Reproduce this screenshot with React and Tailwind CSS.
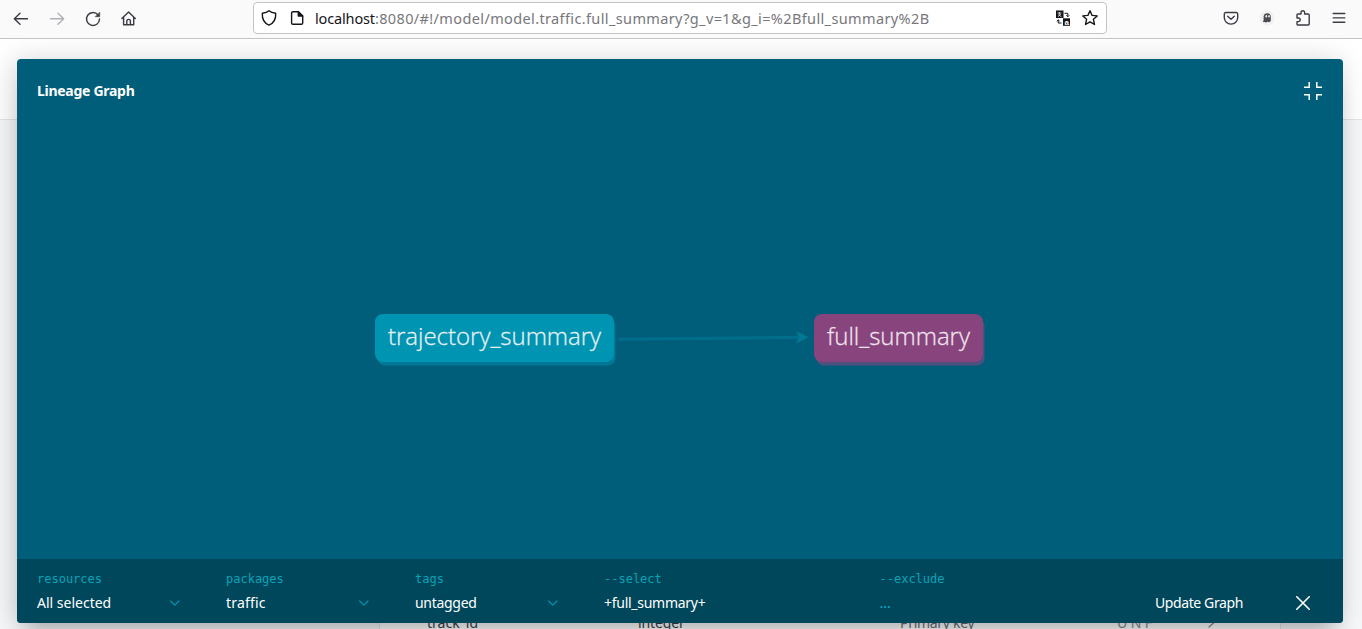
import React from "react";

const UI = "font-['Noto_Sans',sans-serif]";

function Icon({ size = 18, className = "", children, sw = 1.4 }) {
  return (
    <svg
      width={size}
      height={size}
      viewBox={`0 0 ${size} ${size}`}
      fill="none"
      stroke="currentColor"
      strokeWidth={sw}
      strokeLinecap="round"
      strokeLinejoin="round"
      className={`block shrink-0 ${className}`}
    >
      {children}
    </svg>
  );
}

function Toolbar() {
  return (
    <header className="flex h-[39px] items-start border-b border-[#c4c4c7] bg-[#fafafb] text-[#3b3b44]">
      <nav className="flex w-[253px] shrink-0 gap-[18px] pt-[10px] pl-3">
        <Icon>
          <path d="M15.5 8.7H2.5M8 3.2L2.3 8.7L8 14.2" />
        </Icon>
        <Icon className="text-[#b0b0b4]">
          <path d="M2.5 8.7H15.5M10 3.2L15.7 8.7L10 14.2" />
        </Icon>
        <Icon>
          <path d="M14.2 5.1A6.5 6.5 0 1 0 15.5 9" />
          <path d="M15.7 2.5V6.7H11.5Z" fill="currentColor" strokeWidth="0.6" />
        </Icon>
        <Icon>
          <path d="M1.9 8.6L8.6 2.1L15.3 8.6M3.6 7.2V14.8H13.7V7.2M6.8 14.6V11.2A1.8 1.8 0 0 1 10.4 11.2V14.6" />
        </Icon>
      </nav>
      <div className="mt-[2px] flex h-8 w-[854px] shrink-0 items-center rounded-[4px] border border-[#c4c4c7] bg-white pl-[6px] text-[#15141a]">
        <Icon>
          <path d="M9 1.7C10.7 3.2 13 3.9 15.7 4.2C16 10 13.7 14.2 9 16.1C4.3 14.2 2 10 2.3 4.2C5 3.9 7.3 3.2 9 1.7Z" />
        </Icon>
        <Icon className="ml-[10px]">
          <path d="M5 2.7H10.3L14.7 7V13.9A1.4 1.4 0 0 1 13.3 15.3H5A1.4 1.4 0 0 1 3.6 13.9V4.1A1.4 1.4 0 0 1 5 2.7Z" />
          <path d="M10.3 2.7V7H14.7Z" fill="currentColor" />
        </Icon>
        <span className={`${UI} ml-[9px] w-[730px] pb-[1px] text-[14.5px] leading-5 tracking-[0.37px] whitespace-nowrap`}>
          <span className="tracking-[-0.15px]">localhost</span>
          <span className="text-[#77777c]">:8080/#!/model/model.traffic.full_summary?g_v=1&amp;g_i=%2Bfull_summary%2B</span>
        </span>
        <svg width="16" height="18" viewBox="0 0 16 18" className="ml-[10px] block shrink-0">
          <rect x="1" y="1.5" width="7.5" height="7.5" fill="#15141a" />
          <path d="M2.5 4H6.5M4.5 3V5.5M3 7.7L6 5M3 5.5L6.5 7.7" stroke="#fff" strokeWidth="0.7" fill="none" />
          <rect x="8" y="9.3" width="7" height="7.5" fill="#15141a" />
          <text x="9.4" y="15.6" fontSize="8" fontWeight="700" fill="#fff" fontFamily="Liberation Sans, sans-serif">a</text>
          <path d="M9.5 4.3H12.8V7.5M11.4 6.3L12.8 7.8L14.2 6.3M6.5 14H3.2V11M1.8 12.2L3.2 10.8L4.6 12.2" stroke="#15141a" fill="none" />
        </svg>
        <Icon className="ml-[10px]">
          <path d="M9 1.7L11.1 6.4L16.2 6.9L12.4 10.3L13.5 15.5L9 12.8L4.5 15.5L5.6 10.3L1.8 6.9L6.9 6.4Z" />
        </Icon>
      </div>
      <div className="flex grow items-start justify-end gap-[18px] pt-[9px] pr-[14px]">
        <Icon>
          <path d="M3.6 3.5H14.4A1.5 1.5 0 0 1 15.7 5V8.7A6.7 6.4 0 0 1 2.3 8.7V5A1.5 1.5 0 0 1 3.6 3.5Z" />
          <path d="M5.7 7.2L9 10.3L12.3 7.2" />
        </Icon>
        <svg width="18" height="18" viewBox="0 0 18 18" className="block shrink-0">
          <circle cx="9" cy="9" r="7.6" fill="#f1f1f2" />
          <path d="M4.8 12.9L5.6 11.5V7.4Q6 4.3 9.4 4.3Q12.8 4.5 12.8 8V12L11.2 13.2L9.8 12.8L8 13.5L6.5 12.9Z" fill="#4a4a50" />
          <ellipse cx="8.3" cy="7.3" rx="0.9" ry="1.3" fill="#ececee" />
          <ellipse cx="11" cy="7.3" rx="0.8" ry="1.3" fill="#ececee" />
        </svg>
        <Icon>
          <path d="M3 7.6V5.8A.8 .8 0 0 1 3.8 5H7V3.5A1.8 1.8 0 0 1 10.6 3.5V5H14.2A1 1 0 0 1 15.2 6V15A1 1 0 0 1 14.2 16H4A1 1 0 0 1 3 15V12.6H4.4A1.8 1.8 0 0 0 4.4 9H3Z" />
        </Icon>
        <Icon>
          <path d="M3.2 4.5H14.8M3.2 8.9H14.8M3.2 13.3H14.8" />
        </Icon>
      </div>
    </header>
  );
}

function Backdrop() {
  return (
    <div className="flex h-[590px] flex-col">
      <div className="h-[81px] shrink-0 border-b border-[#e3e6e8] bg-white" />
      <div className="flex grow items-end bg-[#f5f7f9] pl-[379px]">
        <div className={`${UI} flex h-5 w-[902px] border-x border-[#e3e6e8] bg-white text-[14px] leading-5 text-[#35424c]`}>
          <span className="w-[211px] shrink-0 pt-[4px] pl-[47px]">track_id</span>
          <span className="w-[262px] shrink-0 pt-[4px] pl-[47px] tracking-[-0.1px]">integer</span>
          <span className="w-[217px] shrink-0 pt-[4px] pl-[47px] tracking-[-0.3px] text-[#66717a]">Primary key</span>
          <span className="w-[134px] shrink-0 pt-[4px] pl-[47px] tracking-[-0.1px] text-[#7f8a92]">U N F</span>
          <Icon size={14} className="mt-[8px] text-[#7f8a92]" sw={1.2}>
            <path d="M5 1L10 5.5L5 10" />
          </Icon>
        </div>
      </div>
    </div>
  );
}

function Select({ label, value, fit }) {
  return (
    <div className="flex w-[189px] shrink-0 flex-col">
      <Label>{label}</Label>
      <div className="flex items-center justify-between pr-[45px]">
        <Value fit={fit}>{value}</Value>
        <Icon size={12} sw={1.2} className="text-[#0094b3]">
          <path d="M1.6 4L5.8 8.2L10 4" />
        </Icon>
      </div>
    </div>
  );
}

function Label({ children }) {
  return <span className="font-['DejaVu_Sans_Mono',monospace] text-[12px] leading-[18px] text-[#0ba3b8]">{children}</span>;
}

function Value({ children, className = "text-white", fit = "tracking-[0px]" }) {
  return <span className={`${UI} text-[14px] leading-[30px] whitespace-nowrap ${fit} ${className}`}>{children}</span>;
}

function Node({ children, className }) {
  return (
    <div
      className={`absolute top-[191px] flex h-[48px] items-center justify-center rounded-[8px] pb-[4px] font-['Open_Sans',sans-serif] text-[24px] font-light whitespace-nowrap [-webkit-text-stroke:0.3px_currentColor] ${className}`}
    >
      {children}
    </div>
  );
}

function Graph() {
  return (
    <div className="relative h-[436px]">
      <svg className="absolute top-[205px] left-[600px] block" width="195" height="20" viewBox="0 0 195 20">
        <path d="M1 11.2L183 9.3" stroke="#006f8d" strokeWidth="3" />
        <path d="M179 3L191.5 9.2L179 15.5L182 9.3Z" fill="#007896" />
      </svg>
      <Node className="left-[358px] w-[239px] bg-[#0094b3] text-[#e6f0f2] shadow-[2px_4px_0_-0.5px_#007896]">trajectory_summary</Node>
      <Node className="left-[797px] w-[169px] bg-[#88447d] text-[#eee4ed] shadow-[2px_4px_0_-0.5px_#4f507d]">full_summary</Node>
    </div>
  );
}

function LineagePanel() {
  return (
    <section className="absolute top-[59px] left-[17px] flex h-[564px] w-[1326px] flex-col overflow-hidden rounded-[4px] bg-[#005e7a]">
      <div className="flex h-[64px] shrink-0 items-center justify-between pr-[21px] pl-5">
        <h1 className={`${UI} pb-[2px] text-[14px] font-bold tracking-[-0.28px] text-white`}>Lineage Graph</h1>
        <svg width="18" height="18" viewBox="0 0 18 18" fill="none" stroke="#fff" strokeWidth="1.5" className="block">
          <path d="M0 5.2H5.2V0M12.8 0V5.2H18M0 12.8H5.2V18M12.8 18V12.8H18" />
        </svg>
      </div>
      <Graph />
      <footer className="flex h-16 shrink-0 bg-[#00475b] pt-[11px] pl-5">
        <Select label="resources" value="All selected" />
        <Select label="packages" value="traffic" fit="tracking-[0.2px]" />
        <Select label="tags" value="untagged" fit="tracking-[-0.3px]" />
        <div className="flex w-[275.5px] shrink-0 flex-col">
          <Label>--select</Label>
          <Value fit="tracking-[-0.27px]">+full_summary+</Value>
        </div>
        <div className="flex w-[275.5px] shrink-0 flex-col">
          <Label>--exclude</Label>
          <Value className="text-[#0bb1c9]">...</Value>
        </div>
        <div className="mt-[18px] flex h-[30px] grow items-center justify-between pr-[33px]">
          <Value fit="tracking-[-0.4px]">Update Graph</Value>
          <Icon size={14} sw={1.6} className="text-white">
            <path d="M0.8 0.8L13.2 13.2M13.2 0.8L0.8 13.2" />
          </Icon>
        </div>
      </footer>
    </section>
  );
}

export default function App() {
  return (
    <div className="relative h-[629px] w-[1362px] overflow-hidden bg-white">
      <div className="relative z-20"><Toolbar /></div>
      <Backdrop />
      <div className="absolute top-[59px] left-[17px] h-[564px] w-[1326px] rounded-[4px] shadow-[-3px_2px_28px_rgba(0,0,0,0.18),0_18px_20px_-10px_rgba(0,0,0,0.22)]" />
      <LineagePanel />
    </div>
  );
}
